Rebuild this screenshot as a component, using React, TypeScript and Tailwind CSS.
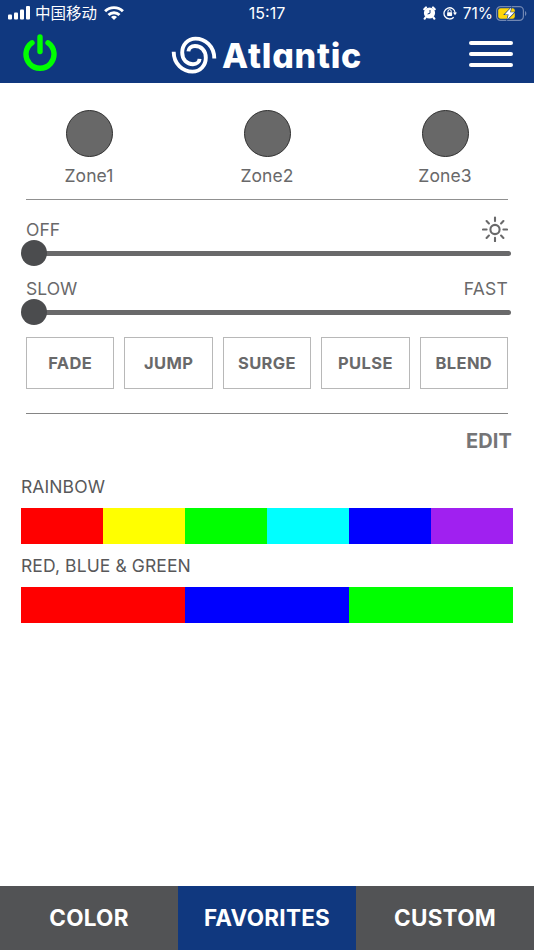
import { type ReactNode } from "react";

const zones = ["Zone1", "Zone2", "Zone3"];
const effects = ["FADE", "JUMP", "SURGE", "PULSE", "BLEND"];

const favorites = [
  {
    name: "RAINBOW",
    colors: ["#ff0000", "#ffff00", "#00ff00", "#00ffff", "#0000ff", "#a020f0"],
  },
  { name: "RED, BLUE & GREEN", colors: ["#ff0000", "#0000ff", "#00ff00"] },
];

const tabs = ["COLOR", "FAVORITES", "CUSTOM"];

function StatusBar() {
  return (
    <div className="relative flex h-[26px] items-center justify-between pl-2 pr-[7px] text-white">
      <div className="flex items-center">
        <svg width="23" height="14" viewBox="0 0 23 14" fill="currentColor">
          <rect x="0" y="8.6" width="4" height="5" rx="1" />
          <rect x="6" y="6.6" width="4" height="7" rx="1" />
          <rect x="12" y="3.6" width="4" height="10" rx="1" />
          <rect x="18" y="0" width="4" height="13.6" rx="1" />
        </svg>
        <span className="ml-1 font-['Noto_Sans_CJK_SC',sans-serif] text-[15.5px] leading-none">
          中国移动
        </span>
        <svg className="ml-[7px]" width="20" height="14" viewBox="0 0 20 14">
          <g fill="none" stroke="currentColor" strokeWidth="2.9">
            <path d="M1.1 5.3a12.6 12.6 0 0 1 17.8 0" />
            <path d="M4.5 9a7.8 7.8 0 0 1 11 0" />
          </g>
          <path d="M10 14 7 11.1a4.3 4.3 0 0 1 6 0z" fill="currentColor" />
        </svg>
      </div>
      <span className="absolute left-1/2 top-px -translate-x-1/2 text-[16px] leading-6">15:17</span>
      <div className="flex items-center">
        <svg width="13" height="14" viewBox="0 0 13 14">
          <circle cx="6.5" cy="7" r="5.6" fill="currentColor" />
          <path d="M1.3 3.2 3 1.5M11.7 3.2 10 1.5M2.6 11.4l-.9 1.2M10.4 11.4l.9 1.2" stroke="currentColor" strokeWidth="2.2" strokeLinecap="round" />
          <path d="M7 4v3.2L4.6 8" fill="none" stroke="#10387f" strokeWidth="1" />
        </svg>
        <svg className="ml-[7px]" width="14" height="14" viewBox="0 0 14 14">
          <path d="M10.7 11.2A5.6 5.6 0 1 1 12.2 7" fill="none" stroke="currentColor" strokeWidth="1.3" />
          <path d="M10 6.4h4l-2 2.8z" fill="currentColor" />
          <rect x="4.1" y="6.2" width="5" height="3.7" rx=".6" fill="currentColor" />
          <path d="M5 6.4V5.2a1.6 1.6 0 0 1 3.2 0v1.2" fill="none" stroke="currentColor" strokeWidth="1" />
        </svg>
        <span className="ml-1.5 mt-px text-[15.5px] leading-6">71%</span>
        <svg className="ml-[3px]" width="31" height="15" viewBox="0 0 31 15">
          <rect x=".6" y=".6" width="26.8" height="13.8" rx="4" fill="none" stroke="#7187b3" strokeWidth="1.2" />
          <path d="M29 5v5c1.8-.8 1.8-4.2 0-5z" fill="#7187b3" />
          <rect x="2.2" y="2.2" width="16.6" height="10.6" rx="2.4" fill="#ffd60a" />
          <path
            d="m15.2 1.6-6.6 6.9h4l-1.4 5.1 7.2-7.3h-4.2z"
            fill="#fff"
            stroke="#10387f"
            strokeWidth="1.2"
            paintOrder="stroke"
          />
        </svg>
      </div>
    </div>
  );
}

function Logo() {
  const arm = "M44.3 25.5C44.3 13 35 5.6 25.5 5.6 17.5 5.6 12.2 12 12.2 19.5 12.2 27 17 31.2 23 31.2 26.8 31.2 29.4 28.8 29.6 25.8";
  return (
    <div className="flex w-[194px] items-center text-white">
      <svg
        className="shrink-0"
        width="50"
        height="44"
        viewBox="0 0 50 44"
        fill="none"
        stroke="currentColor"
        strokeWidth="3.9"
      >
        <path d={arm} />
        <path d={arm} transform="rotate(180 24 22.1)" />
      </svg>
      <span className="ml-[2px] mt-[3px] font-['Inter',sans-serif] text-[34px] font-extrabold leading-none tracking-[0.75px] [font-feature-settings:'cv11']">
        Atlantic
      </span>
    </div>
  );
}

function Slider({ left, right }: { left: string; right: ReactNode }) {
  return (
    <div className="h-[59px]">
      <div className="flex h-6 items-center justify-between px-[5px]">
        <span className="mt-[2px]">{left}</span>
        {right}
      </div>
      <div className="-mt-px flex h-[26px] items-center">
        <div className="z-10 size-[26px] rounded-full bg-[#4b4c4e]" />
        <div className="-ml-1 mr-[2px] h-[5px] flex-1 rounded-r-full bg-[#69696a]" />
      </div>
    </div>
  );
}

function SunIcon() {
  return (
    <svg width="26" height="26" viewBox="0 0 26 26" fill="none" stroke="#69696a" strokeWidth="2.1" strokeLinecap="round">
      <circle cx="13" cy="13.5" r="4.6" />
      <path d="M13 1.5v3.6M13 21.9v3.3M1 13.5h3.6M21.4 13.5H25M4.6 5.1l2.3 2.3M19.1 19.6l2.3 2.3M4.6 21.9l2.3-2.3M19.1 7.4l2.3-2.3" />
    </svg>
  );
}

export default function App() {
  return (
    <div className="flex h-[950px] w-[534px] flex-col overflow-hidden bg-white font-['Inter',sans-serif] text-[#69696a]">
      <header className="h-[83px] shrink-0 bg-[#10387f]">
        <StatusBar />
        <div className="flex h-[57px] items-center pl-[23px] pr-[21px]">
          <svg className="-mt-1 mr-[113px]" width="34" height="38" viewBox="0 0 34 38" fill="none" stroke="#00ff00" strokeWidth="5.4" strokeLinecap="round">
            <path d="M17 3v14.5" />
            <path d="M9 8.8a14 14 0 1 0 16 0" />
          </svg>
          <Logo />
          <div className="-mt-px ml-auto flex w-11 flex-col gap-[7px]">
            <span className="h-1 rounded-full bg-white" />
            <span className="h-1 rounded-full bg-white" />
            <span className="h-1 rounded-full bg-white" />
          </div>
        </div>
      </header>

      <main className="flex-1 px-[21px]">
        <div className="-mx-[21px] grid h-[116px] grid-cols-3 pt-[27px]">
          {zones.map((zone) => (
            <div key={zone} className="flex flex-col items-center">
              <div className="size-[47px] rounded-full border border-[#303030] bg-[#686868]" />
              <span className="mt-[5px] text-[17.5px] leading-[27px] tracking-[0.1px]">{zone}</span>
            </div>
          ))}
        </div>
        <hr className="mx-[5px] border-[#909090]" />

        <div className="mt-[17px] text-[17.5px] leading-6">
          <Slider left="OFF" right={<SunIcon />} />
          <Slider left="SLOW" right={<span className="mt-[2px] tracking-[0.2px]">FAST</span>} />
        </div>

        <div className="mx-[5px] mt-[2px] grid grid-cols-5 gap-[10px]">
          {effects.map((effect) => (
            <button
              key={effect}
              type="button"
              className="h-[52px] border border-[#b8b8b8] text-[16.5px] font-bold tracking-[0.4px]"
            >
              {effect}
            </button>
          ))}
        </div>
        <hr className="mx-[5px] mt-6 border-[#858585]" />

        <div className="mt-[15px] flex justify-end pr-px">
          <button type="button" className="text-[20px] font-bold leading-6 tracking-[0.1px] text-[#757577]">
            EDIT
          </button>
        </div>

        <div className="mt-5">
          {favorites.map((fav) => (
            <section key={fav.name} className="h-[79px]">
              <h2 className="h-[35px] text-[17.5px] leading-[28px] tracking-[0.1px] text-[#58585a]">
                {fav.name}
              </h2>
              <div className="flex h-9">
                {fav.colors.map((color) => (
                  <div key={color} className="flex-1" style={{ backgroundColor: color }} />
                ))}
              </div>
            </section>
          ))}
        </div>
      </main>

      <nav className="grid h-16 shrink-0 grid-cols-3 text-[22.5px] font-bold tracking-[0.25px] text-white">
        {tabs.map((tab) => (
          <button
            key={tab}
            type="button"
            className={tab === "FAVORITES" ? "bg-[#10387f]" : "bg-[#525355]"}
          >
            {tab}
          </button>
        ))}
      </nav>
    </div>
  );
}
